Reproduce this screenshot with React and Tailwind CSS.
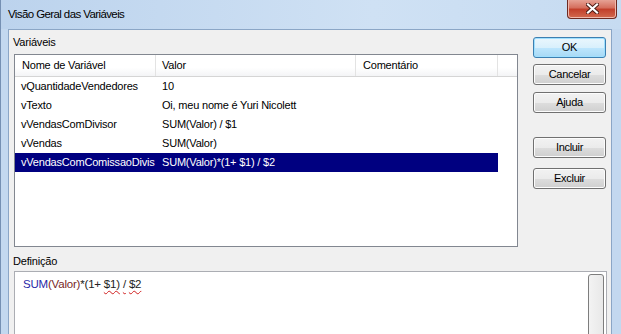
import React from 'react';

const ROWS = [
  { name: 'vQuantidadeVendedores', value: '10' },
  { name: 'vTexto', value: 'Oi, meu nome é Yuri Nicolett' },
  { name: 'vVendasComDivisor', value: 'SUM(Valor) / $1' },
  { name: 'vVendas', value: 'SUM(Valor)' },
  // the column is too narrow for the full name, the list shows it cut
  { name: 'vVendasComComissaoDivis', value: 'SUM(Valor)*(1+ $1) / $2', selected: true },
];

function WinButton({ children, primary, className = '' }) {
  return (
    <div
      className={[
        'flex h-[21px] w-[73px] items-center justify-center rounded-[3px] border text-[11px] tracking-[-0.3px]',
        primary
          ? 'border-[#3c7fb1] bg-[linear-gradient(#eaf6fd_0%,#d9f0fc_50%,#bee6fd_51%,#a7d9f5_100%)] shadow-[inset_0_0_0_1px_#9fe0ff]'
          : 'border-[#707070] bg-[linear-gradient(#f2f2f2_0%,#ebebeb_50%,#dddddd_51%,#cfcfcf_100%)] shadow-[inset_0_0_0_1px_#fcfcfc]',
        className,
      ].join(' ')}
    >
      {children}
    </div>
  );
}

export default function App() {
  return (
    <div className="flex h-[334px] w-[621px] flex-col overflow-hidden border-l border-[#7590b3] bg-[#c3d8ef] font-['Liberation_Sans',Arial,sans-serif] text-[11px] text-black">
      {/* title bar */}
      <div className="relative flex h-[29px] shrink-0 items-center bg-[linear-gradient(90deg,#bcd3ed,#cfe1f4_60%,#c6dbf1)] pl-[7px]">
        <span className="text-[11.5px] tracking-[-0.6px] text-black">Visão Geral das Variáveis</span>
        <div className="absolute right-[4px] top-[-1px] flex h-[20px] w-[50px] items-center justify-center rounded-b-[4px] border border-t-0 border-[#6d2a22] bg-[linear-gradient(#e8a89c_0%,#d5705f_45%,#c2402c_55%,#d26a4f_100%)] shadow-[inset_0_0_0_1px_#f0b9ad]">
          <svg width="13" height="11" viewBox="0 0 13 11">
            <path d="M2 1.5 L11 9.5 M11 1.5 L2 9.5" stroke="#4a1a14" strokeWidth="4" strokeLinecap="square" />
            <path d="M2 1.5 L11 9.5 M11 1.5 L2 9.5" stroke="#ffffff" strokeWidth="2.2" strokeLinecap="square" />
          </svg>
        </div>
      </div>

      {/* window body */}
      <div className="flex min-h-0 flex-1 pl-[7px] pr-[9px]">
        <div className="flex min-w-0 flex-1 flex-col border-l border-r border-t border-[#8ba6c6] bg-[#f0f0f0]">
          <div className="flex">
            {/* list side */}
            <div className="flex flex-col">
              <div className="pl-[4px] pt-[6px] leading-[13px] tracking-[-0.2px]">Variáveis</div>
              <div className="ml-[5px] mt-[5px] h-[193px] w-[504px] border border-[#828790] bg-white">
                <div className="flex h-[22px] border-b border-[#d5d5d5] bg-[linear-gradient(#ffffff_0%,#ffffff_60%,#f3f4f6_100%)] tracking-[-0.2px]">
                  <div className="flex w-[141px] items-center border-r border-[#e3e3e3] pl-[7px]">Nome de Variável</div>
                  <div className="flex w-[200px] items-center border-r border-[#e3e3e3] pl-[6px]">Valor</div>
                  <div className="flex w-[142px] items-center border-r border-[#e3e3e3] pl-[7px]">Comentário</div>
                  <div className="flex-1" />
                </div>
                {ROWS.map((r) => (
                  <div
                    key={r.name}
                    className={[
                      'flex h-[19px] w-[483px] items-center tracking-[-0.2px]',
                      r.selected ? 'bg-[#000080] text-white' : '',
                    ].join(' ')}
                  >
                    <div className="w-[141px] whitespace-nowrap pl-[6px]">{r.name}</div>
                    <div className="w-[200px] whitespace-nowrap pl-[6px]">{r.value}</div>
                    <div className="w-[142px]" />
                  </div>
                ))}
              </div>
            </div>

            {/* buttons */}
            <div className="ml-[15px] flex flex-col pt-[7px]">
              <WinButton primary>OK</WinButton>
              <WinButton className="mt-[6px]">Cancelar</WinButton>
              <WinButton className="mt-[7px]">Ajuda</WinButton>
              <WinButton className="mt-[24px]">Incluir</WinButton>
              <WinButton className="mt-[10px]">Excluir</WinButton>
            </div>
          </div>

          {/* definition */}
          <div className="pl-[4px] pt-[8px] leading-[13px] tracking-[-0.2px]">Definição</div>
          <div className="relative ml-[5px] mt-[3px] w-[593px] flex-1 border-l border-r border-t border-[#abadb3] bg-white">
            <div className="pl-[8px] pt-[5px] text-[11.5px] leading-[14px] tracking-[-0.2px]">
              <span className="text-[#2a2aa8]">SUM</span>
              <span className="text-[#7a1f1f]">(Valor)</span>
              <span className="text-[#222]">*(1+ </span>
              <span className="text-[#222] underline decoration-[#d02020] decoration-wavy decoration-1 underline-offset-2">$1)</span>
              <span className="text-[#222]"> </span>
              <span className="text-[#222] underline decoration-[#d02020] decoration-wavy decoration-1 underline-offset-2">/</span>
              <span className="text-[#222]"> </span>
              <span className="text-[#222] underline decoration-[#d02020] decoration-wavy decoration-1 underline-offset-2">$2</span>
            </div>
            <div className="absolute right-[2px] top-[2px] h-[70px] w-[16px] rounded-[3px] border border-[#7d7d7d] bg-[linear-gradient(90deg,#f3f3f3,#e8e8e8)]" />
          </div>
        </div>
      </div>
    </div>
  );
}
